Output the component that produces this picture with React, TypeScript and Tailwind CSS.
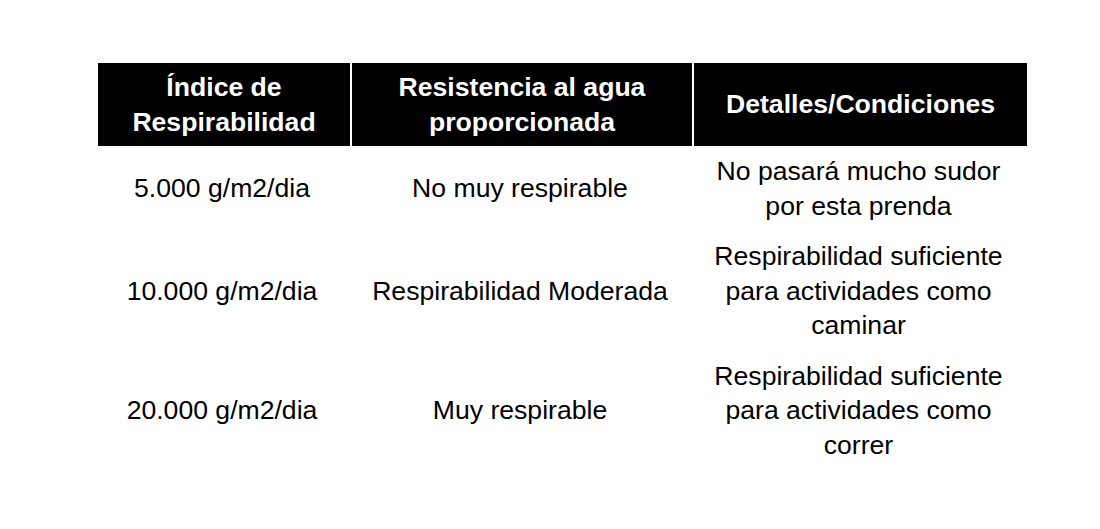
const rows = [
  {
    index: '5.000 g/m2/dia',
    level: 'No muy respirable',
    details: 'No pasará mucho sudor por esta prenda',
  },
  {
    index: '10.000 g/m2/dia',
    level: 'Respirabilidad Moderada',
    details: 'Respirabilidad suficiente para actividades como caminar',
  },
  {
    index: '20.000 g/m2/dia',
    level: 'Muy respirable',
    details: 'Respirabilidad suficiente para actividades como correr',
  },
];

const headers = ['Índice de Respirabilidad', 'Resistencia al agua proporcionada', 'Detalles/Condiciones'];

export default function App() {
  return (
    <div className="min-h-[529px] w-[1100px] bg-white pt-[63px] pl-[98px] font-['Liberation_Sans',Arial,sans-serif] text-[26.6px] leading-[34.5px] text-black">
      <div className="grid w-[929px] grid-cols-[252px_340px_333px] gap-x-[2px]">
        {headers.map((h) => (
          <div
            key={h}
            className="flex h-[83px] items-center justify-center bg-black px-[10px] text-center font-bold text-white"
          >
            {h}
          </div>
        ))}
        {rows.map((row) => (
          <div key={row.index} className="contents">
            <div className="flex items-center justify-center pl-[8px] pr-[12px] py-[8px] text-center">{row.index}</div>
            <div className="flex items-center justify-center pl-[8px] pr-[12px] py-[8px] text-center">{row.level}</div>
            <div className="flex items-center justify-center pl-[8px] pr-[12px] py-[8px] text-center">{row.details}</div>
          </div>
        ))}
      </div>
    </div>
  );
}
